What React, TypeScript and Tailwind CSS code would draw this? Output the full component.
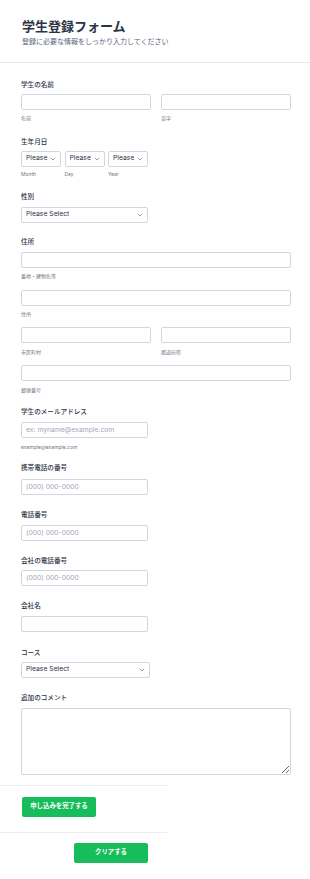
import React from "react";

const FONT = "font-['Inter','Noto_Sans_CJK_JP',sans-serif]";

function Chevron() {
  return (
    <svg width="6" height="4" viewBox="0 0 6 4" className="shrink-0">
      <path d="M0.8 0.8 L3 3 L5.2 0.8" fill="none" stroke="#6f7686" strokeWidth="0.7" />
    </svg>
  );
}

function Label({ children }: { children: React.ReactNode }) {
  return <div className="text-[6.6px] leading-[10px] font-medium text-[#2c3345]">{children}</div>;
}

function Sub({ children, className = "" }: { children: React.ReactNode; className?: string }) {
  return <div className={`text-[5px] leading-[8px] text-[#6f7686] ${className}`}>{children}</div>;
}

function Input({ className = "", placeholder = "" }: { className?: string; placeholder?: string }) {
  return (
    <input
      placeholder={placeholder}
      className={`h-[16px] rounded-[2px] border border-[#d3d6df] bg-white px-[4px] text-[6.8px] outline-none placeholder:text-[#a3a9b6] ${className}`}
    />
  );
}

function Select({ text, className = "" }: { text: string; className?: string }) {
  return (
    <div
      className={`flex h-[16px] items-center justify-between gap-[2px] rounded-[2px] border border-[#d3d6df] bg-white pl-[4px] pr-[4px] text-[6.8px] text-[#2c3345] ${className}`}
    >
      <span className="overflow-hidden whitespace-nowrap">{text}</span>
      <Chevron />
    </div>
  );
}

export default function App() {
  return (
    <div className={`w-[310px] min-h-[879px] bg-white text-[#2c3345] ${FONT}`}>
      <header className="border-b border-[#e6e8ee] px-[22px] pt-[18px] pb-[16px]">
        <h1 className="text-[13px] leading-[16px] font-bold text-[#2c3345]">学生登録フォーム</h1>
        <p className="mt-[2.5px] text-[7px] leading-[9px] text-[#57647e]">登録に必要な情報をしっかり入力してください</p>
      </header>

      <div className="flex flex-col pl-[21px] pr-[19px] pt-[17px]">
        {/* 学生の名前 */}
        <div className="flex flex-col">
          <Label>学生の名前</Label>
          <div className="mt-[4px] flex gap-[10px]">
            <div className="flex w-[130px] flex-col">
              <Input className="w-full" />
              <Sub className="mt-[4px]">名前</Sub>
            </div>
            <div className="flex w-[130px] flex-col">
              <Input className="w-full" />
              <Sub className="mt-[4px]">苗字</Sub>
            </div>
          </div>
        </div>

        {/* 生年月日 */}
        <div className="mt-[15px] flex flex-col">
          <Label>生年月日</Label>
          <div className="mt-[4px] flex gap-[3.5px]">
            <div className="flex w-[40px] flex-col">
              <Select text="Please Select" className="w-full" />
              <Sub className="mt-[3px]">Month</Sub>
            </div>
            <div className="flex w-[40px] flex-col">
              <Select text="Please" className="w-full" />
              <Sub className="mt-[3px]">Day</Sub>
            </div>
            <div className="flex w-[40px] flex-col">
              <Select text="Please" className="w-full" />
              <Sub className="mt-[3px]">Year</Sub>
            </div>
          </div>
        </div>

        {/* 性別 */}
        <div className="mt-[14px] flex flex-col">
          <Label>性別</Label>
          <Select text="Please Select" className="mt-[5px] w-[127px]" />
        </div>

        {/* 住所 */}
        <div className="mt-[14px] flex flex-col">
          <Label>住所</Label>
          <Input className="mt-[5px] w-full" />
          <Sub className="mt-[4px]">番地・建物名等</Sub>
          <Input className="mt-[10px] w-full" />
          <Sub className="mt-[4px]">住所</Sub>
          <div className="mt-[9px] flex gap-[10px]">
            <div className="flex w-[130px] flex-col">
              <Input className="w-full" />
              <Sub className="mt-[5px]">市区町村</Sub>
            </div>
            <div className="flex w-[130px] flex-col">
              <Input className="w-full" />
              <Sub className="mt-[5px]">都道府県</Sub>
            </div>
          </div>
          <Input className="mt-[9px] w-full" />
          <Sub className="mt-[5px]">郵便番号</Sub>
        </div>

        {/* メール */}
        <div className="mt-[13px] flex flex-col">
          <Label>学生のメールアドレス</Label>
          <Input className="mt-[5px] w-[127px]" placeholder="ex: myname@example.com" />
          <Sub className="mt-[5px] text-[#2c3345]">example@example.com</Sub>
        </div>

        <div className="mt-[12px] flex flex-col">
          <Label>携帯電話の番号</Label>
          <Input className="mt-[6px] w-[127px]" placeholder="(000) 000-0000" />
        </div>

        <div className="mt-[15px] flex flex-col">
          <Label>電話番号</Label>
          <Input className="mt-[5px] w-[127px]" placeholder="(000) 000-0000" />
        </div>

        <div className="mt-[15px] flex flex-col">
          <Label>会社の電話番号</Label>
          <Input className="mt-[4px] w-[127px]" placeholder="(000) 000-0000" />
        </div>

        <div className="mt-[15px] flex flex-col">
          <Label>会社名</Label>
          <Input className="mt-[5px] w-[127px]" />
        </div>

        <div className="mt-[16px] flex flex-col">
          <Label>コース</Label>
          <Select text="Please Select" className="mt-[4px] w-[129px]" />
        </div>

        <div className="mt-[15px] flex flex-col">
          <Label>追加のコメント</Label>
          <textarea className="mt-[5px] h-[67px] w-full rounded-[2px] border border-[#d3d6df] bg-white p-[4px] text-[7px] outline-none" />
        </div>
      </div>

      <div className="mt-[10px] w-[167px] border-t border-[#eceef2] pt-[11px] pb-[15px] pl-[22px]">
        <button className="flex h-[20px] w-[74px] items-center justify-center rounded-[2px] bg-[#18bd5b] text-[6.4px] font-semibold text-white">
          申し込みを完了する
        </button>
      </div>
      <div className="w-[167px] border-t border-[#eceef2] pt-[10px] pl-[74px]">
        <button className="flex h-[20px] w-[74px] items-center justify-center rounded-[2px] bg-[#18bd5b] text-[6.4px] font-semibold text-white">
          クリアする
        </button>
      </div>
    </div>
  );
}
